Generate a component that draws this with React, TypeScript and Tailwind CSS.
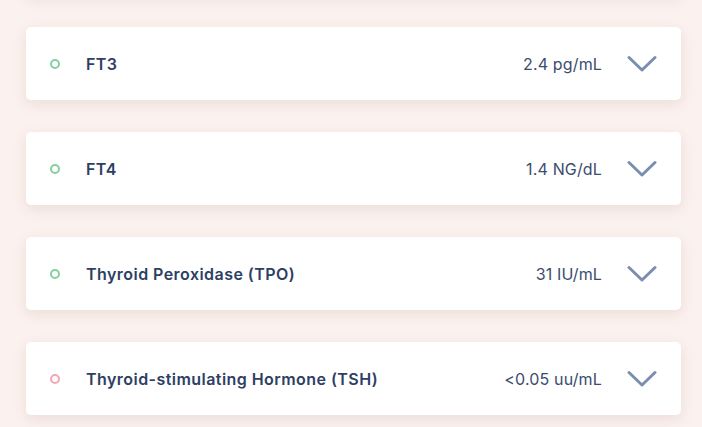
import React from 'react';

type Marker = {
  name: string;
  value: string;
  ok: boolean;
};

const markers: Marker[] = [
  { name: 'FT3', value: '2.4 pg/mL', ok: true },
  { name: 'FT4', value: '1.4 NG/dL', ok: true },
  { name: 'Thyroid Peroxidase (TPO)', value: '31 IU/mL', ok: true },
  { name: 'Thyroid-stimulating Hormone (TSH)', value: '<0.05 uu/mL', ok: false },
];

const Chevron: React.FC = () => (
  <svg width="30" height="18" viewBox="0 0 30 18" fill="none" className="shrink-0">
    <path d="M2 2.5 L15 15 L28 2.5" stroke="#7a8fb0" strokeWidth="3" strokeLinecap="round" strokeLinejoin="round" />
  </svg>
);

const MarkerCard: React.FC<{ m: Marker }> = ({ m }) => (
  <div className="flex h-[73px] w-[655px] items-center rounded-[5px] bg-white pl-[24px] pr-[24px] shadow-[0_4px_14px_rgba(120,80,70,0.12)]">
    <span
      className={`h-[10px] w-[10px] shrink-0 rounded-full border-2 ${m.ok ? 'border-[#86cf9f]' : 'border-[#f6a5b3]'}`}
    />
    <span className="ml-[26px] pt-[1px] text-[16px] font-semibold tracking-[0.45px] text-[#2d4063]">{m.name}</span>
    <span className="ml-auto pt-[1px] text-[16px] tracking-[0.15px] text-[#3b4c6d]">{m.value}</span>
    <span className="ml-[25px]">
      <Chevron />
    </span>
  </div>
);

export default function App() {
  return (
    <div
      className="h-[427px] w-[702px] overflow-hidden bg-[#fbf1ee]"
      style={{ fontFamily: 'Inter, "Open Sans", sans-serif' }}
    >
      <div className="-mt-[78px] ml-[26px] flex flex-col gap-[32px]">
        <div className="h-[73px] w-[655px] rounded-[5px] bg-white shadow-[0_4px_14px_rgba(120,80,70,0.12)]" />
        {markers.map((m) => (
          <MarkerCard key={m.name} m={m} />
        ))}
      </div>
    </div>
  );
}
